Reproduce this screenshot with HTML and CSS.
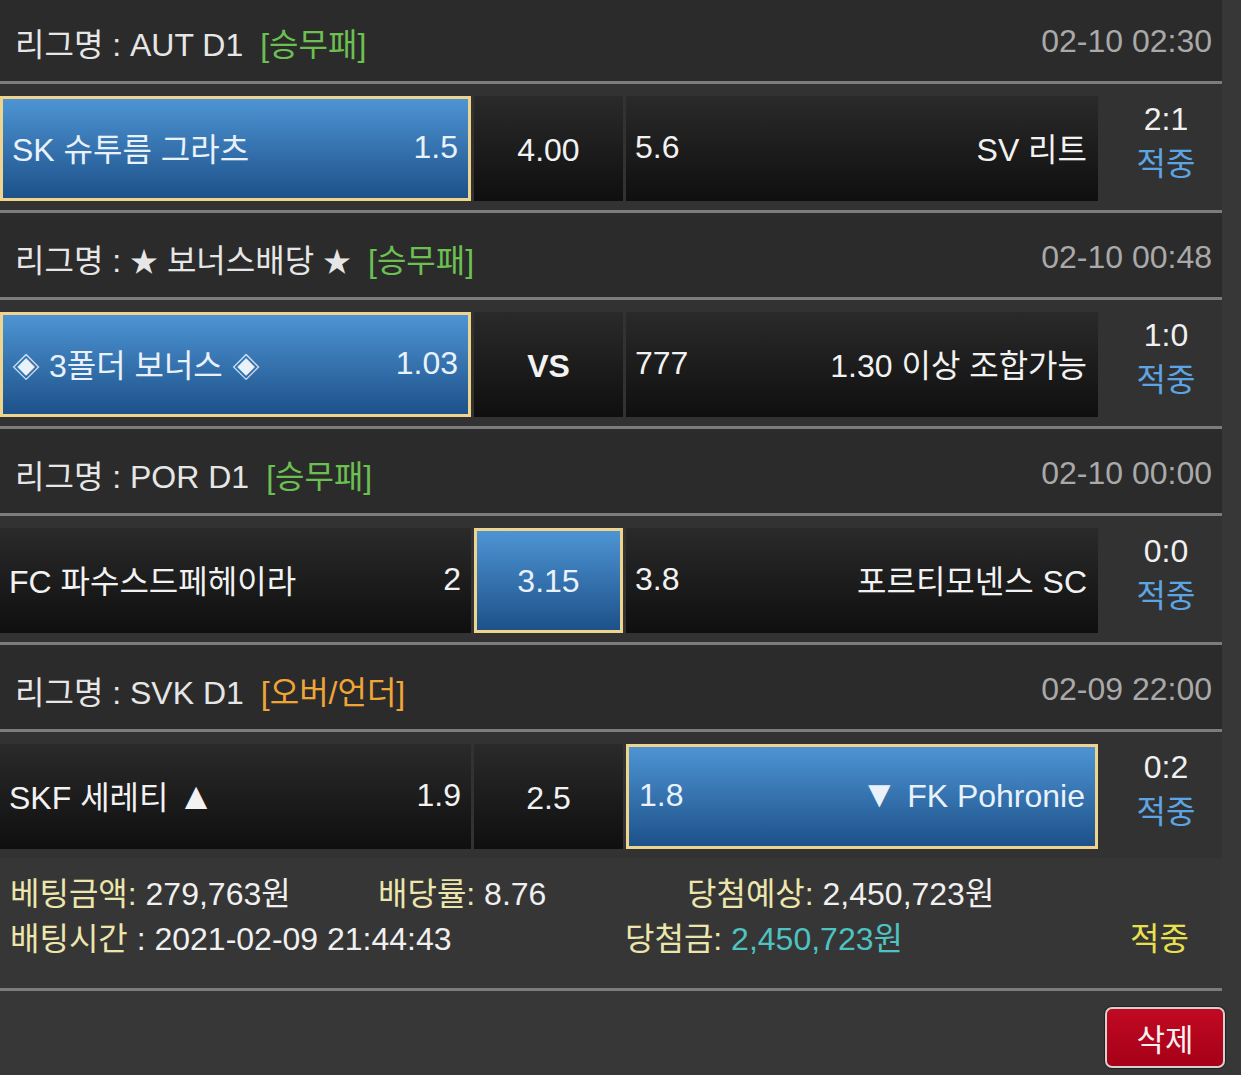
FILE: index.html
```html
<!DOCTYPE html>
<html lang="ko">
<head>
<meta charset="utf-8">
<title>베팅내역</title>
<link rel="stylesheet" href="styles.css">
</head>
<body>
<div class="board">
  <div class="match">
    <div class="league"><span class="lg">리그명 : AUT D1</span><span class="tag green">[승무패]</span><span class="time">02-10 02:30</span></div>
    <div class="row">
      <div class="cell home sel"><span>SK 슈투름 그라츠</span><span>1.5</span></div>
      <div class="cell draw">4.00</div>
      <div class="cell away"><span>5.6</span><span>SV 리트</span></div>
      <div class="result"><div>2:1</div><div class="hit">적중</div></div>
    </div>
  </div>
  <div class="match">
    <div class="league"><span class="lg">리그명 : <span class="sym">★</span> 보너스배당 <span class="sym">★</span></span><span class="tag green">[승무패]</span><span class="time">02-10 00:48</span></div>
    <div class="row">
      <div class="cell home sel"><span><span class="sym">◈</span> 3폴더 보너스 <span class="sym">◈</span></span><span>1.03</span></div>
      <div class="cell draw vs">VS</div>
      <div class="cell away"><span>777</span><span>1.30 이상 조합가능</span></div>
      <div class="result"><div>1:0</div><div class="hit">적중</div></div>
    </div>
  </div>
  <div class="match">
    <div class="league"><span class="lg">리그명 : POR D1</span><span class="tag green">[승무패]</span><span class="time">02-10 00:00</span></div>
    <div class="row">
      <div class="cell home"><span>FC 파수스드페헤이라</span><span>2</span></div>
      <div class="cell draw sel">3.15</div>
      <div class="cell away"><span>3.8</span><span>포르티모넨스 SC</span></div>
      <div class="result"><div>0:0</div><div class="hit">적중</div></div>
    </div>
  </div>
  <div class="match last">
    <div class="league"><span class="lg">리그명 : SVK D1</span><span class="tag orange">[오버/언더]</span><span class="time">02-09 22:00</span></div>
    <div class="row">
      <div class="cell home"><span>SKF 세레티 <span class="tri">▲</span></span><span>1.9</span></div>
      <div class="cell draw">2.5</div>
      <div class="cell away sel"><span>1.8</span><span><span class="tri">▼</span> FK Pohronie</span></div>
      <div class="result"><div>0:2</div><div class="hit">적중</div></div>
    </div>
  </div>
  <div class="summary">
    <div class="sline">
      <div class="s1"><span class="lbl">베팅금액:</span> 279,763원</div>
      <div class="s2"><span class="lbl">배당률:</span> 8.76</div>
      <div><span class="lbl">당첨예상:</span> 2,450,723원</div>
    </div>
    <div class="sline">
      <div class="t1"><span class="lbl">배팅시간</span> : 2021-02-09 21:44:43</div>
      <div class="t2"><span class="lbl">당첨금:</span> <span class="cyan">2,450,723원</span></div>
      <div class="yellow">적중</div>
    </div>
  </div>
</div>
<div class="actions"><button class="del">삭제</button></div>
</body>
</html>
```
FILE: styles.css
```css
html, body {
  margin: 0;
  padding: 0;
}
body {
  background: #373737;
  font-family: "Liberation Sans", "Noto Sans CJK KR", sans-serif;
  font-size: 32px;
  color: #f0f0f0;
  width: 1241px;
  height: 1075px;
  overflow: hidden;
}
.board {
  width: 1222px;
  background: #2b2b2b;
  margin-top: -3px;
  border-bottom: 3px solid #7c7c7c;
}
.league {
  box-sizing: content-box;
  height: 79px;
  padding: 5px 10px 0 15px;
  display: flex;
  align-items: center;
  color: #e6e6e6;
  background: #2b2b2b;
  border-bottom: 3px solid #7c7c7c;
}
.sym {
  font-size: 28px;
}
.tri {
  font-size: 38px;
  line-height: 1;
}
.tag {
  margin-left: 17px;
}
.green { color: #6cc052; }
.orange { color: #f0a636; }
.time {
  margin-left: auto;
  color: #a9a9a9;
}
.row {
  height: 126px;
  box-sizing: border-box;
  padding: 12px 0 9px;
  display: flex;
  gap: 3px;
  background: #323232;
}
.match:not(.last) .row {
  height: 129px;
  border-bottom: 3px solid #7c7c7c;
}
.cell {
  height: 105px;
  box-sizing: border-box;
  display: flex;
  align-items: center;
  background: linear-gradient(#2a2a2a, #0f0f0f);
  color: #f2f2f2;
  padding-bottom: 3px;
  white-space: nowrap;
}
.home {
  width: 471px;
  justify-content: space-between;
  padding-left: 9px;
  padding-right: 10px;
}
.draw {
  width: 149px;
  justify-content: center;
  padding-top: 4px;
  padding-bottom: 0;
}
.vs {
  font-weight: bold;
}
.away {
  width: 472px;
  justify-content: space-between;
  padding-left: 9px;
  padding-right: 11px;
}
.cell.sel {
  background: linear-gradient(#4d94d4, #1d5189);
  border: 3px solid #efd48e;
  color: #e9f1fa;
}
.home.sel { padding-left: 9px; padding-right: 10px; }
.away.sel { padding-left: 10px; padding-right: 10px; }
.draw.sel { padding-top: 2px; }
.result {
  flex: 1;
  padding-left: 9px;
  display: flex;
  flex-direction: column;
  align-items: center;
  justify-content: center;
  line-height: 45px;
  padding-bottom: 14px;
}
.hit {
  color: #5da5e2;
}
.summary {
  height: 130px;
  box-sizing: border-box;
  padding: 14px 0 0 10px;
  background: #363636;
}
.sline {
  display: flex;
  line-height: 45px;
  white-space: nowrap;
}
.lbl { color: #ece6ac; }
.s1 { width: 368px; }
.s2 { width: 309px; }
.t1 { width: 615px; }
.t2 { width: 505px; }
.cyan { color: #4fc2c2; }
.yellow { color: #e8e04c; }
.actions {
  display: flex;
  justify-content: flex-end;
  padding: 16px 16px 0 0;
}
.del {
  width: 120px;
  height: 61px;
  border: 2px solid #d8d0cc;
  border-radius: 7px;
  background: linear-gradient(#c00a22, #a60018);
  color: #f6f0f0;
  font-family: "Liberation Sans", "Noto Sans CJK KR", sans-serif;
  font-size: 31px;
  box-shadow: 0 0 0 1px #222;
  padding: 0;
}
```
